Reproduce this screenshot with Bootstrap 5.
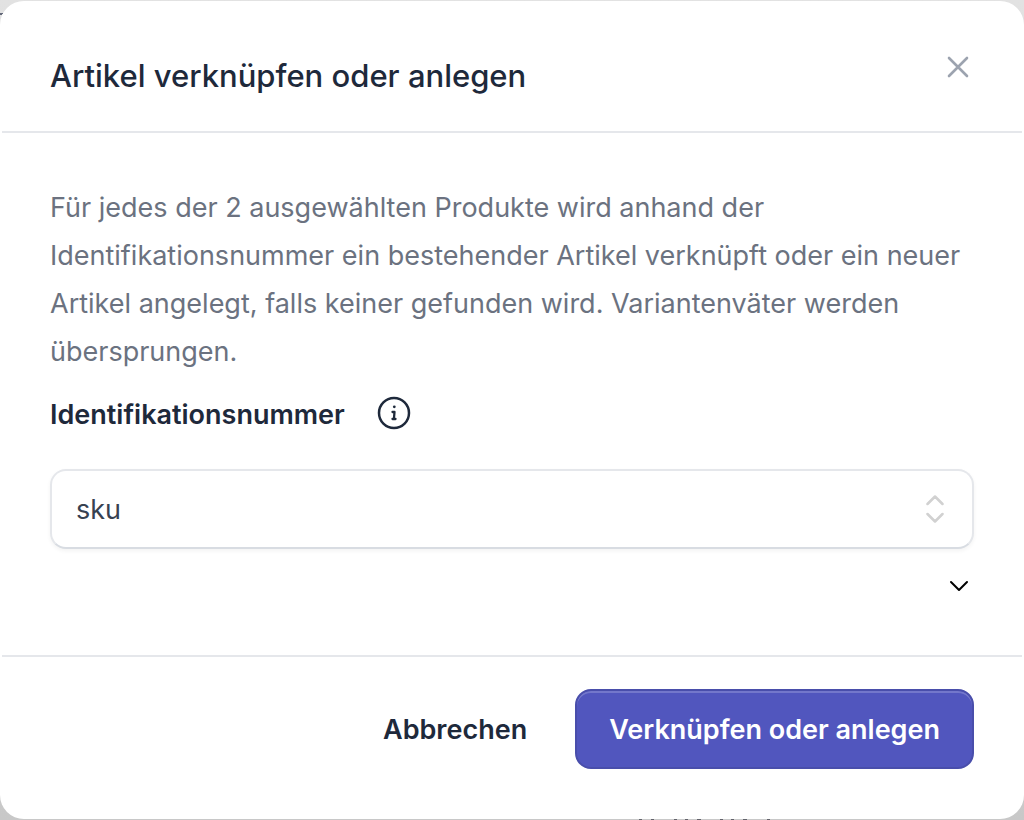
<!DOCTYPE html>
<html lang="de">
<head>
<meta charset="utf-8">
<meta name="viewport" content="width=device-width, initial-scale=1">
<title>Artikel verknüpfen oder anlegen</title>
<link href="https://cdn.jsdelivr.net/npm/bootstrap@5.3.0/dist/css/bootstrap.min.css" rel="stylesheet">
<style>
  body { font-family: Inter, "Liberation Sans", sans-serif; font-size: 27px; color: #1e293b; background: linear-gradient(#e2e2e2, #c8c8c8); }
  .dialog-panel { border-radius: 24px; padding: 0 2px; margin-top: 1px; }
  .dialog-head { padding: 49px 48px 29px; border-bottom: 2px solid #e5e7eb; }
  .dialog-title { font-size: 31px; line-height: 52px; font-weight: 500; }
  .dialog-main { padding: 51px 48px 54px; }
  .intro { line-height: 48px; color: #6b7280; }
  .field-label { line-height: 46px; font-weight: 600; }
  .id-select { height: 80px; margin-top: 31px; padding: 2px 80px 0 24px; font-size: 27px; color: #374151; border: 2px solid #e5e7eb; border-bottom-color: #d8dce2; border-radius: 16px; box-shadow: 0 2px 4px rgba(0,0,0,.05);
    background-image: url("data:image/svg+xml,%3Csvg xmlns='http://www.w3.org/2000/svg' viewBox='0 0 20 30' fill='none' stroke='%23d1d1d1' stroke-width='2.5' stroke-linecap='round' stroke-linejoin='round'%3E%3Cpath d='M2.500 10 10 2.500l7.500 7.500M2.500 20l7.500 7.500 7.500-7.500'/%3E%3C/svg%3E");
    background-size: 20px 30px; background-position: right 27px center; }
  .more-row { margin-top: 22px; }
  .dialog-foot { padding: 32px 48px 50px; border-top: 2px solid #e5e7eb; }
  .action { height: 80px; font-size: 27px; font-weight: 600; border-radius: 16px; padding: 2px 32px 0; }
  .action-cancel { color: #1e293b; padding: 2px 0 0; }
  .action-primary { color: #fff; background: #5156be; border: 2px solid #494eab; box-shadow: inset 0 2px 0 rgba(255,255,255,.2); }
  .behind-left { top: 13px; left: 0; }
</style>
</head>
<body>
<svg class="behind-left position-absolute" width="3" height="2" aria-hidden="true"><path fill="#64697a" d="M0 0h3v1H2v1H0z"/></svg>
<main class="dialog-panel bg-white overflow-hidden" role="dialog" aria-labelledby="dialog-title">
  <header class="dialog-head d-flex justify-content-between align-items-start">
    <h1 class="dialog-title m-0" id="dialog-title">Artikel verknüpfen oder anlegen</h1>
    <button type="button" class="btn p-0 border-0 d-flex" aria-label="Schließen">
      <svg width="32" height="34" viewBox="0 0 32 34" fill="none" stroke="#9ca3af" stroke-width="2.600" stroke-linecap="round"><path d="m7 8 18 18M25 8 7 26"/></svg>
    </button>
  </header>
  <form>
    <div class="dialog-main">
      <p class="intro m-0">Für jedes der 2 ausgewählten Produkte wird anhand der Identifikationsnummer ein bestehender Artikel verknüpft oder ein neuer Artikel angelegt, falls keiner gefunden wird. Variantenväter werden übersprungen.</p>
      <div class="d-flex align-items-center mt-3">
        <label class="field-label" for="idnr">Identifikationsnummer</label>
        <button type="button" class="btn p-0 border-0 d-flex ms-4" aria-label="Information">
          <svg width="50" height="40" viewBox="0 0 50 40" fill="none" stroke="#1e293b" stroke-linecap="round" stroke-linejoin="round"><circle cx="25" cy="18" r="15" stroke-width="2.500"/><path d="M23.500 17h2l-.6 7M23.500 24h3" stroke-width="2.300"/><circle cx="25.300" cy="11.800" r="1.400" fill="#1e293b" stroke="none"/></svg>
        </button>
      </div>
      <select class="form-select id-select" id="idnr"><option>sku</option></select>
      <div class="more-row d-flex justify-content-end">
        <button type="button" class="btn p-0 border-0 d-flex" aria-label="Mehr anzeigen">
          <svg width="30" height="30" viewBox="0 0 30 30" fill="none" stroke="#000" stroke-width="2" stroke-linecap="round" stroke-linejoin="round"><path d="m7 11 8 8 8-8"/></svg>
        </button>
      </div>
    </div>
    <footer class="dialog-foot d-flex justify-content-end gap-5">
      <button type="button" class="btn action action-cancel border-0">Abbrechen</button>
      <button type="button" class="btn action action-primary">Verknüpfen oder anlegen</button>
    </footer>
  </form>
</main>
<svg class="d-block w-100" height="1" viewBox="0 0 1024 1" aria-hidden="true"><path fill="#62636b" d="M639 0h3v1h-3zM651 0h3v1h-3zM674 0h3v1h-3zM685 0h3v1h-3zM697 0h4v1h-4zM720 0h3v1h-3zM731 0h3v1h-3zM743 0h4v1h-4zM767 0h3v1h-3z"/></svg>
<script src="https://cdn.jsdelivr.net/npm/bootstrap@5.3.0/dist/js/bootstrap.bundle.min.js"></script>
</body>
</html>
